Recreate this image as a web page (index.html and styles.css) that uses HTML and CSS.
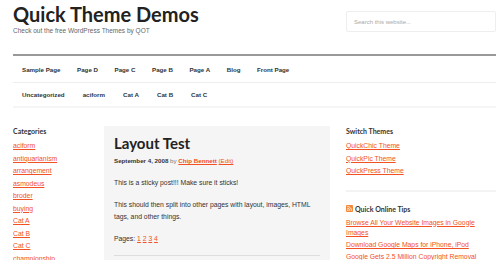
FILE: index.html
```html
<!DOCTYPE html>
<html lang="en">
<head>
  <meta charset="UTF-8">
  <meta name="viewport" content="width=device-width, initial-scale=1.0">
  <title>Quick Theme Demos</title>
  <link rel="stylesheet" href="styles.css">
</head>
<body>
  <div class="site">
    <header class="site-header">
      <div class="title-area">
        <h1 class="site-title">Quick Theme Demos</h1>
        <p class="site-description">Check out the free WordPress Themes by QOT</p>
      </div>
      <form class="search-form">
        <input type="search" class="search-input" placeholder="Search this website...">
      </form>
    </header>

    <nav class="nav-primary">
      <a href="#">Sample Page</a>
      <a href="#">Page D</a>
      <a href="#">Page C</a>
      <a href="#">Page B</a>
      <a href="#">Page A</a>
      <a href="#">Blog</a>
      <a href="#">Front Page</a>
    </nav>
    <nav class="nav-secondary">
      <a href="#">Uncategorized</a>
      <a href="#">aciform</a>
      <a href="#">Cat A</a>
      <a href="#">Cat B</a>
      <a href="#">Cat C</a>
    </nav>

    <div class="site-inner">
      <aside class="sidebar-alt">
        <h4 class="widget-title">Categories</h4>
        <ul class="link-list">
          <li><a href="#">aciform</a></li>
          <li><a href="#">antiquarianism</a></li>
          <li><a href="#">arrangement</a></li>
          <li><a href="#">asmodeus</a></li>
          <li><a href="#">broder</a></li>
          <li><a href="#">buying</a></li>
          <li><a href="#">Cat A</a></li>
          <li><a href="#">Cat B</a></li>
          <li><a href="#">Cat C</a></li>
          <li><a href="#">championship</a></li>
        </ul>
      </aside>

      <main class="content">
        <article class="entry">
          <h2 class="entry-title">Layout Test</h2>
          <p class="entry-meta"><span class="date">September 4, 2008</span> by <a class="author" href="#">Chip Bennett</a> <a href="#">(Edit)</a></p>
          <p>This is a sticky post!!! Make sure it sticks!</p>
          <p>This should then split into other pages with layout, images, HTML tags, and other things.</p>
          <p>Pages: <a href="#">1</a> <a href="#">2</a> <a href="#">3</a> <a href="#">4</a></p>
          <hr class="entry-rule">
        </article>
      </main>

      <aside class="sidebar">
        <section class="widget">
          <h4 class="widget-title">Switch Themes</h4>
          <ul class="link-list">
            <li><a href="#">QuickChic Theme</a></li>
            <li><a href="#">QuickPic Theme</a></li>
            <li><a href="#">QuickPress Theme</a></li>
          </ul>
        </section>
        <section class="widget">
          <h4 class="widget-title">
            <svg class="rss" width="7" height="7" viewBox="0 0 7 7">
              <rect width="7" height="7" rx="1" fill="#f3883a"/>
              <circle cx="1.8" cy="5.2" r="0.7" fill="#fff"/>
              <path d="M1.2 3.2a2.6 2.6 0 0 1 2.6 2.6M1.2 1.4a4.4 4.4 0 0 1 4.4 4.4" stroke="#fff" stroke-width="0.8" fill="none"/>
            </svg>
            Quick Online Tips
          </h4>
          <ul class="link-list">
            <li><a href="#">Browse All Your Website Images in Google Images</a></li>
            <li><a href="#">Download Google Maps for iPhone, iPod</a></li>
            <li><a href="#">Google Gets 2.5 Million Copyright Removal</a></li>
          </ul>
        </section>
      </aside>
    </div>
  </div>
</body>
</html>
```

FILE: styles.css
```css
body {
  margin: 0;
  background: #fff;
  color: #333;
  font-family: "Liberation Sans", Arial, sans-serif;
  font-size: 6.8px;
}

a {
  color: #f15123;
}

.site {
  margin: 0 4px 0 13px;
}

/* Header */
.site-header {
  display: flex;
  justify-content: space-between;
  align-items: flex-start;
  height: 54px;
}

.site-title {
  margin: 2px 0 0;
  font-family: Lato, sans-serif;
  font-size: 20px;
  font-weight: 700;
  color: #222;
  line-height: 24px;
}

.site-description {
  margin: 1px 0 0;
  font-size: 6.5px;
  color: #666;
}

.search-form {
  margin-top: 11px;
}

.search-input {
  box-sizing: border-box;
  width: 150px;
  height: 21px;
  border: 1px solid #eee;
  border-radius: 2px;
  padding: 0 7px;
  font-family: "Liberation Sans", Arial, sans-serif;
  font-size: 6px;
  color: #999;
  background: #fff;
}

.search-input::placeholder {
  color: #aaa;
}

/* Menus */
.nav-primary,
.nav-secondary {
  display: flex;
  align-items: center;
  padding-left: 9px;
  gap: 16.5px;
  font-weight: 700;
  font-size: 6.2px;
}

.nav-primary a,
.nav-secondary a {
  color: #333;
  text-decoration: none;
}

.nav-primary {
  border-top: 2.5px solid #999;
  border-bottom: 1px solid #eee;
  height: 26px;
}

.nav-secondary {
  border-bottom: 2px solid #f5f5f5;
  height: 23px;
  gap: 18px;
}

/* Columns */
.site-inner {
  display: grid;
  grid-template-columns: 91px 226px 166px;
  margin-top: 17px;
}

.sidebar-alt {
  margin-right: 14px;
  padding-top: 2px;
}

.sidebar {
  margin-left: 16px;
  padding-top: 2px;
}

.widget-title {
  margin: 0 0 5px;
  font-family: Lato, sans-serif;
  font-size: 7px;
  font-weight: 700;
  color: #333;
  display: flex;
  align-items: center;
  gap: 2px;
}

.link-list {
  list-style: none;
  margin: 0;
  padding: 0;
  line-height: 12.5px;
}

.widget {
  padding-bottom: 12px;
  border-bottom: 2px solid #f3f3f3;
  margin-bottom: 13px;
}

.widget:last-child {
  border-bottom: none;
}

.sidebar .widget:last-child .link-list {
  line-height: 10.5px;
}

.sidebar .widget:last-child .link-list li {
  margin-bottom: 1.5px;
}

/* Content */
.content {
  background: #f5f5f5;
  padding: 5px 10px 20px;
  margin-top: 1px;
}

.entry-title {
  margin: 0;
  font-family: Lato, sans-serif;
  font-size: 15px;
  font-weight: 700;
  color: #222;
  line-height: 24px;
}

.entry-meta {
  margin: 7px 0 12px;
  font-size: 6.2px;
  color: #777;
}

.entry-meta .date {
  font-weight: 700;
  color: #333;
}

.entry-meta .author {
  font-weight: 700;
}

.content p {
  line-height: 12px;
  margin: 0 0 10px;
}

.entry-rule {
  border: none;
  border-top: 1px solid #ddd;
  margin: 4px 0 0;
}
```
